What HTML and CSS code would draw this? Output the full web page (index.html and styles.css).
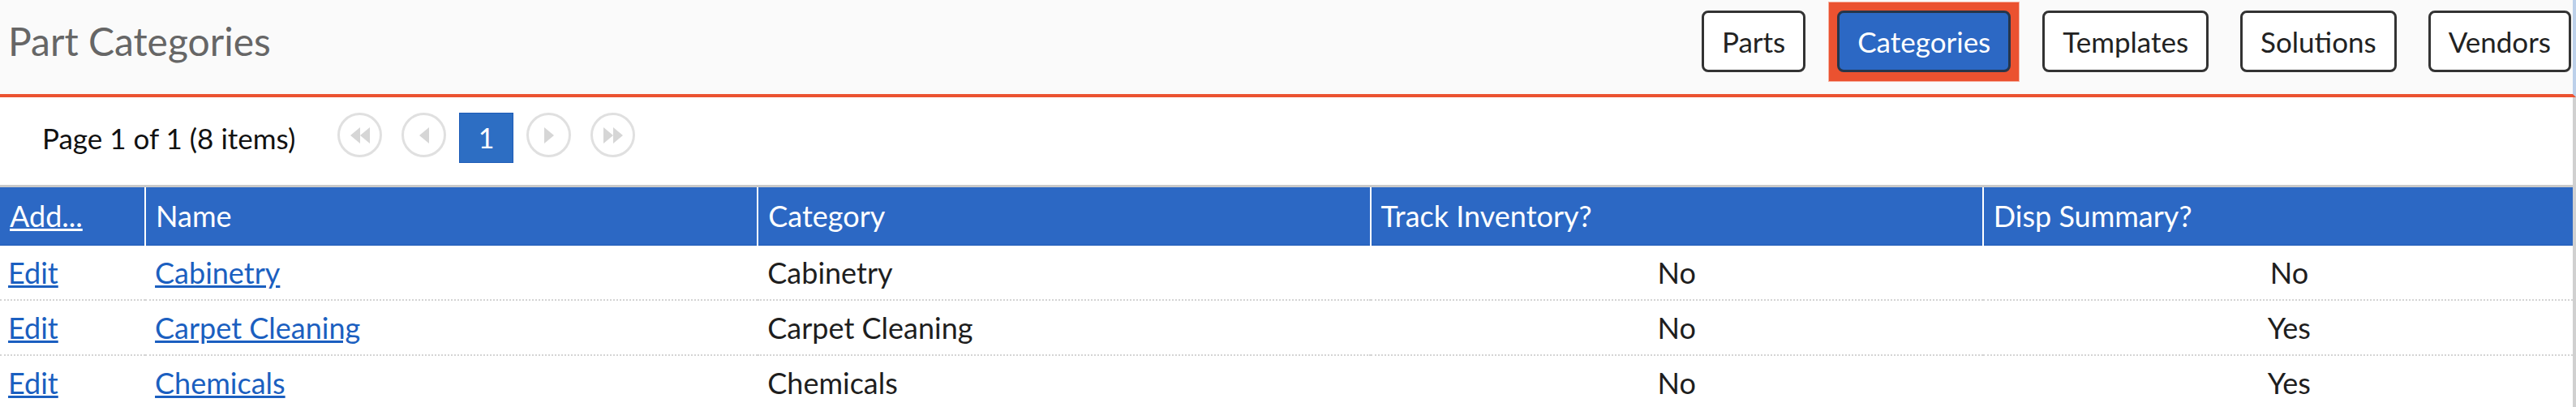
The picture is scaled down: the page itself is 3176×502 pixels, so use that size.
FILE: index.html
```html
<!DOCTYPE html>
<html lang="en">

<head>
	<meta charset="UTF-8">
	<title>Part Categories</title>
	<link rel="stylesheet" href="styles.css">
</head>

<body>
	<div id="page">
		<div id="topBar">
			<h1>Part Categories</h1>
			<div class="tabs">
				<button type="button" class="tab">Parts</button>
				<span class="focusRing"><button type="button" class="tab active">Categories</button></span>
				<button type="button" class="tab">Templates</button>
				<button type="button" class="tab">Solutions</button>
				<button type="button" class="tab">Vendors</button>
			</div>
		</div>
		<div id="content">
			<div class="pager">
				<span class="pageInfo">Page 1 of 1 (8 items)</span>
				<span class="pgBtn">
					<svg width="26" height="22" viewBox="0 0 26 22"><path d="M13 1 L1 11 L13 21 Z M25 1 L13 11 L25 21 Z" fill="#d6d6d6"/></svg>
				</span>
				<span class="pgBtn">
					<svg width="14" height="22" viewBox="0 0 14 22"><path d="M13 1 L1 11 L13 21 Z" fill="#d6d6d6"/></svg>
				</span>
				<span class="pgNum">1</span>
				<span class="pgBtn">
					<svg width="14" height="22" viewBox="0 0 14 22"><path d="M1 1 L13 11 L1 21 Z" fill="#d6d6d6"/></svg>
				</span>
				<span class="pgBtn">
					<svg width="26" height="22" viewBox="0 0 26 22"><path d="M1 1 L13 11 L1 21 Z M13 1 L25 11 L13 21 Z" fill="#d6d6d6"/></svg>
				</span>
			</div>
			<div class="gridWrap">
				<table id="grid">
					<thead>
						<tr>
							<th class="colEdit"><a href="#">Add...</a></th>
							<th class="colName">Name</th>
							<th class="colCat">Category</th>
							<th class="colFlag">Track Inventory?</th>
							<th class="colFlag">Disp Summary?</th>
						</tr>
					</thead>
					<tbody>
						<tr>
							<td><a href="#">Edit</a></td>
							<td><a href="#">Cabinetry</a></td>
							<td>Cabinetry</td>
							<td class="center">No</td>
							<td class="center">No</td>
						</tr>
						<tr>
							<td><a href="#">Edit</a></td>
							<td><a href="#">Carpet Cleaning</a></td>
							<td>Carpet Cleaning</td>
							<td class="center">No</td>
							<td class="center">Yes</td>
						</tr>
						<tr>
							<td><a href="#">Edit</a></td>
							<td><a href="#">Chemicals</a></td>
							<td>Chemicals</td>
							<td class="center">No</td>
							<td class="center">Yes</td>
						</tr>
					</tbody>
				</table>
			</div>
		</div>
	</div>
</body>

</html>
```

FILE: styles.css
```css
* {
    margin: 0;
    padding: 0;
    box-sizing: border-box;
    font-family: Lato, "Liberation Sans", sans-serif;
}
body {
    background: #fff;
    overflow: hidden;
}
div#page {
    width: 3176px;
}
div#topBar {
    display: flex;
    justify-content: space-between;
    align-items: flex-start;
    height: 120px;
    padding: 13px 2px 0 10px;
    background: #fafafa;
    border-bottom: 4px solid #eb5230;
    border-right: 4px solid #bcd0ea;
}
h1 {
    font-size: 48px;
    font-weight: 400;
    color: #666;
    line-height: 76px;
}
.tabs {
    display: flex;
    gap: 39px;
}
button.tab {
    height: 76px;
    padding: 0 22px;
    font-size: 35px;
    color: #222;
    background: #fff;
    border: 3px solid #333;
    border-radius: 8px;
    cursor: pointer;
}
span.focusRing {
    display: block;
    margin: -11px -11px -12px;
    padding: 10px 10px 11px;
    background: #eb5230;
    border: 1px solid #f6b3a2;
}
button.tab.active {
    display: block;
    background: #2c68c4;
    color: #fff;
    border-color: #26364b;
}
div#content {
    border-right: 4px solid #d0d0d0;
}
.pager {
    display: flex;
    align-items: flex-start;
    gap: 24px;
    height: 108px;
    padding: 19px 0 0 52px;
}
.pageInfo {
    font-size: 35px;
    color: #111;
    line-height: 62px;
    margin-right: 28px;
}
.pgBtn {
    display: flex;
    justify-content: center;
    align-items: center;
    width: 55px;
    height: 55px;
    border: 3px solid #e0e0e0;
    border-radius: 50%;
}
.pgNum {
    width: 67px;
    height: 62px;
    margin: 0 -8px;
    background: #2d6ec3;
    border: 1px solid #1d5cb7;
    color: #fff;
    font-size: 34px;
    text-align: center;
    line-height: 60px;
}
.gridWrap {
    overflow: hidden;
    border-top: 3px solid #c9c9c9;
}
table#grid {
    width: 3200px;
    border-collapse: collapse;
    table-layout: fixed;
}
#grid th {
    height: 71px;
    background: #2c68c4;
    color: #fff;
    font-size: 36px;
    font-weight: 400;
    text-align: left;
    padding: 0 12px;
    border-left: 2px solid #fff;
    border-bottom: 1px solid #1f5ab7;
}
#grid th:first-child {
    border-left: 0;
}
#grid th a {
    color: #fff;
}
th.colEdit {
    width: 179px;
}
th.colName, th.colCat, th.colFlag {
    width: 755px;
}
#grid td {
    height: 68px;
    font-size: 36px;
    color: #1e1e1e;
    padding: 0 12px;
    border-bottom: 2px dotted #d4d4d4;
}
#grid td:first-child {
    padding-left: 10px;
}
#grid td a {
    color: #1b5fc0;
}
#grid td.center {
    text-align: center;
}
```
